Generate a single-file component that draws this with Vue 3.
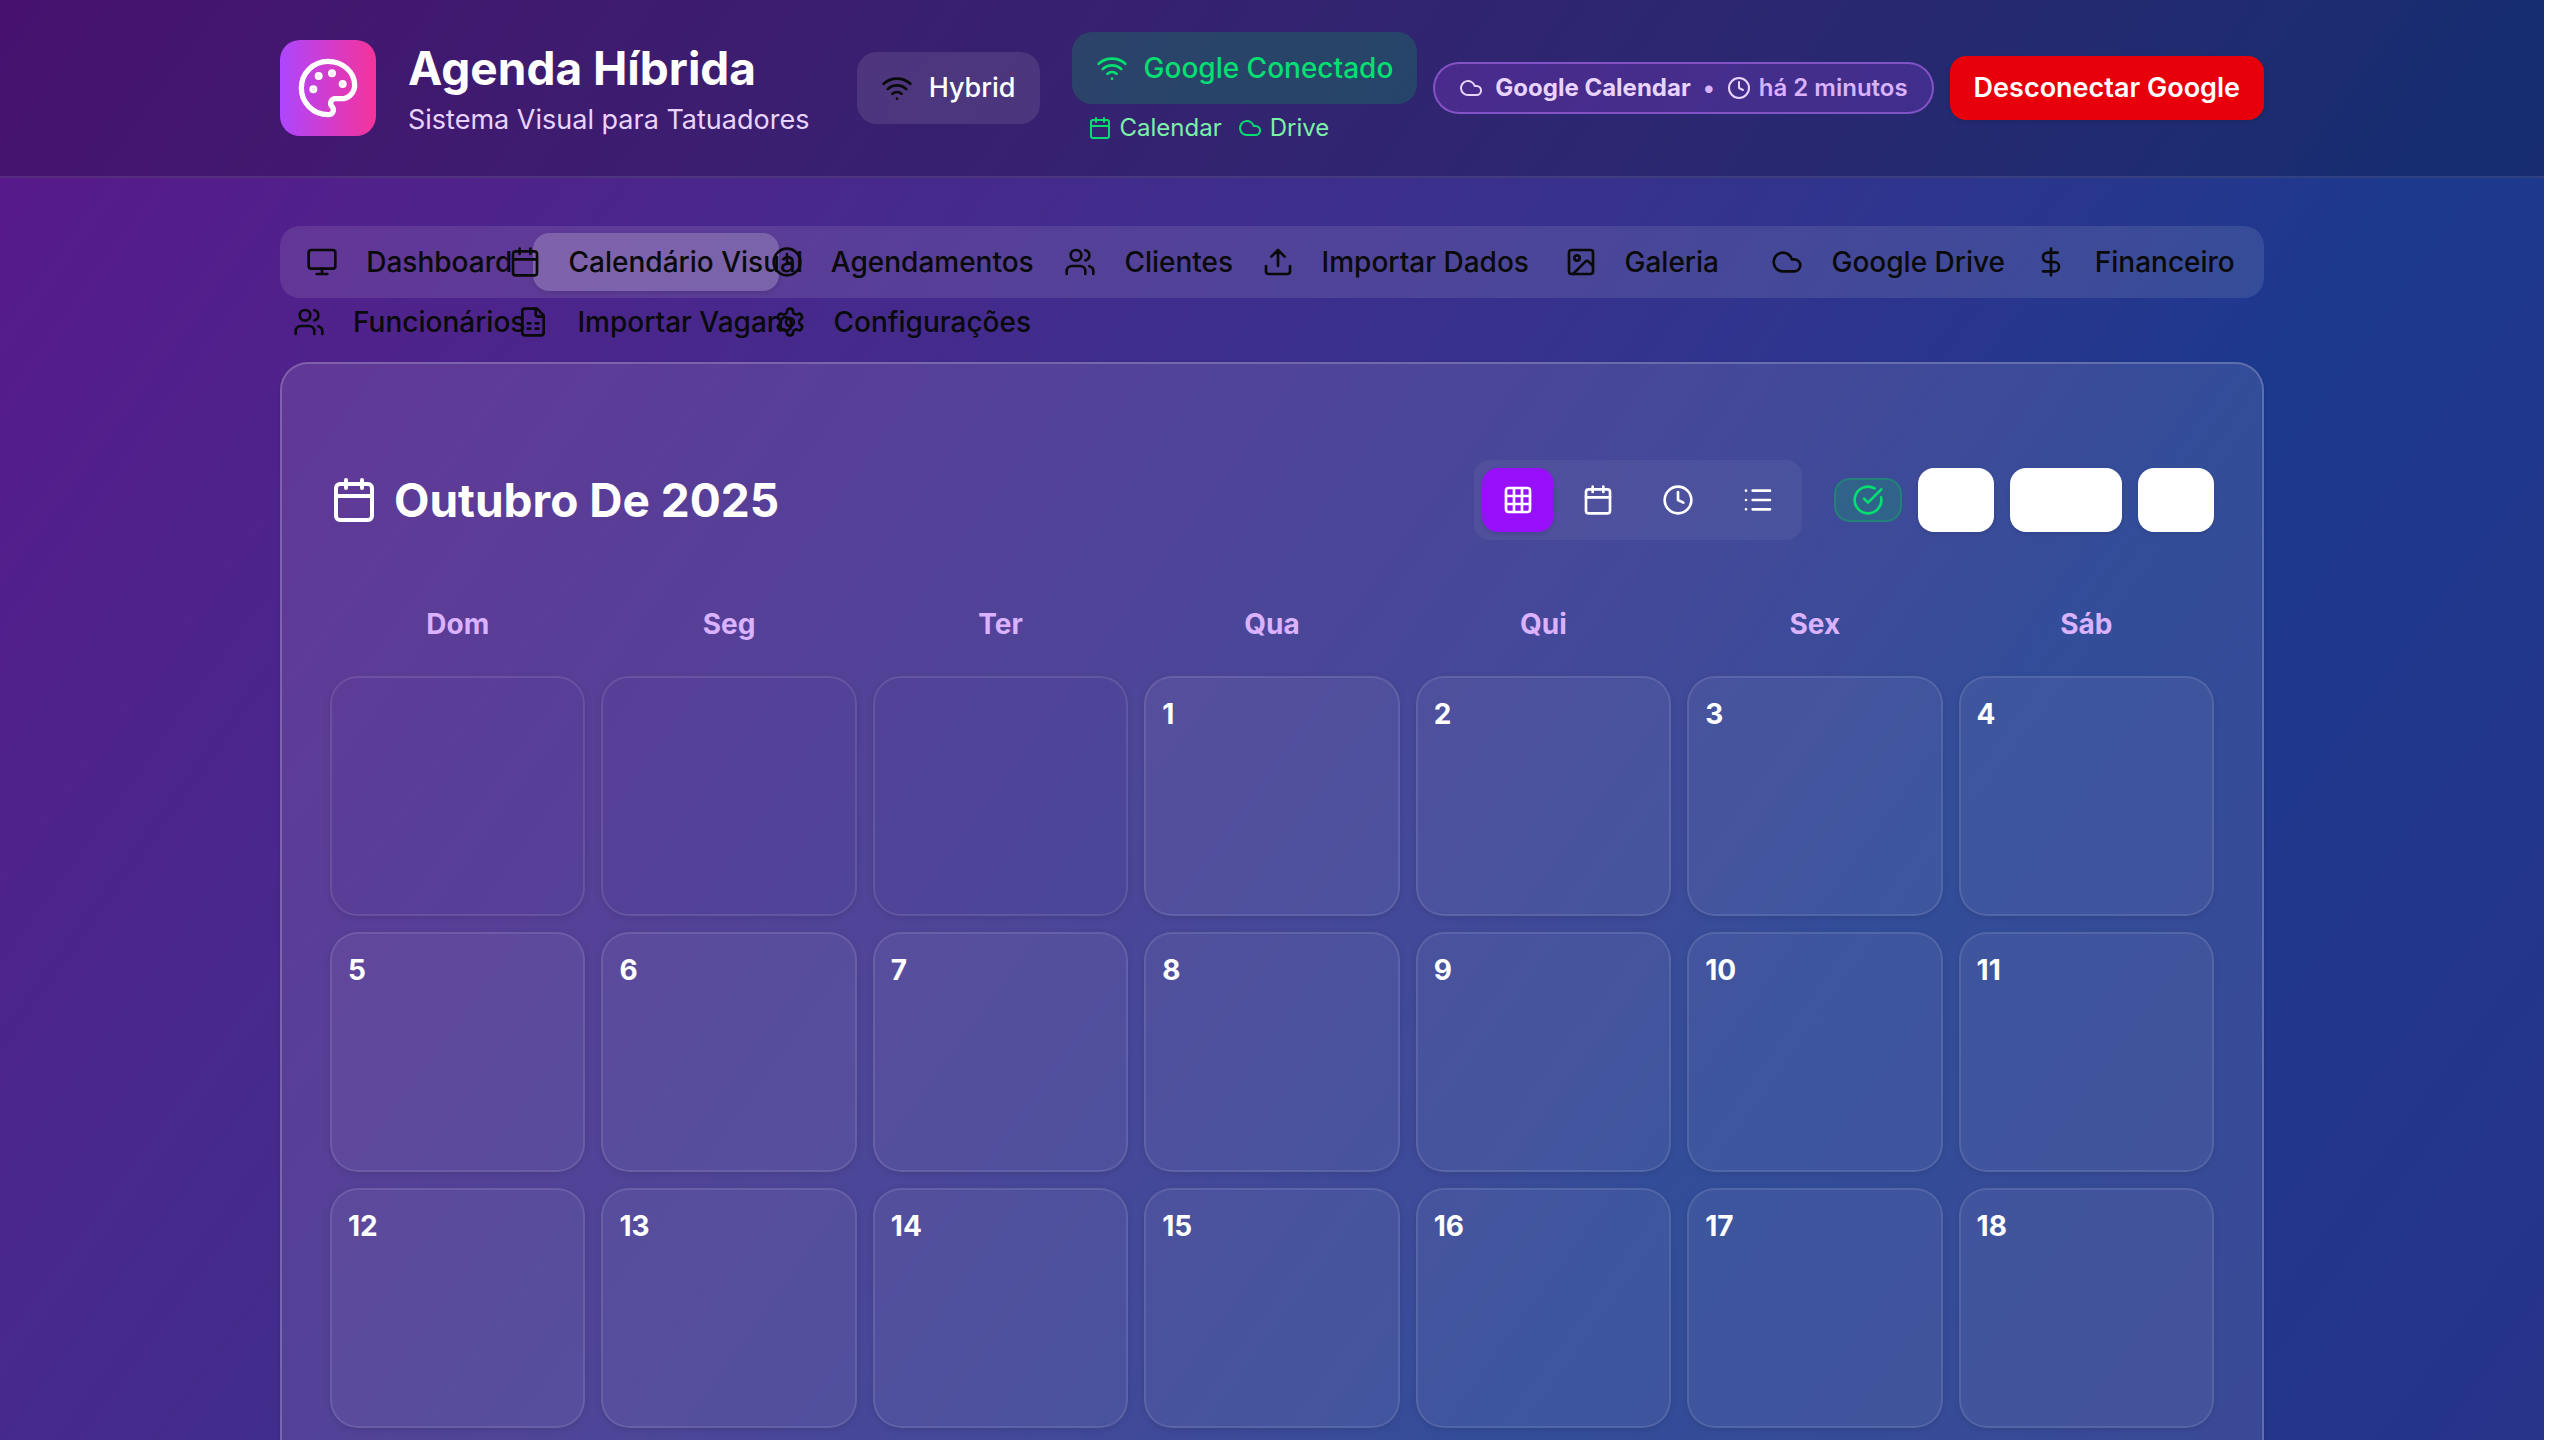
<script setup>
import { h } from 'vue'

const shapes = {
  palette: [
    ['path', { d: 'M12 22a1 1 0 0 1 0-20 10 9 0 0 1 10 9 5 5 0 0 1-5 5h-2.25a1.75 1.75 0 0 0-1.4 2.8l.3.4a1.75 1.75 0 0 1-1.4 2.8z' }],
    ['circle', { cx: 13.5, cy: 6.5, r: 0.5, fill: 'currentColor' }],
    ['circle', { cx: 17.5, cy: 10.5, r: 0.5, fill: 'currentColor' }],
    ['circle', { cx: 6.5, cy: 12.5, r: 0.5, fill: 'currentColor' }],
    ['circle', { cx: 8.5, cy: 7.5, r: 0.5, fill: 'currentColor' }],
  ],
  wifi: [
    ['path', { d: 'M12 20h.01' }],
    ['path', { d: 'M2 8.82a15 15 0 0 1 20 0' }],
    ['path', { d: 'M5 12.859a10 10 0 0 1 14 0' }],
    ['path', { d: 'M8.5 16.429a5 5 0 0 1 7 0' }],
  ],
  calendar: [
    ['path', { d: 'M8 2v4M16 2v4M3 10h18' }],
    ['rect', { x: 3, y: 4, width: 18, height: 18, rx: 2 }],
  ],
  cloud: [['path', { d: 'M17.5 19H9a7 7 0 1 1 6.71-9h1.79a4.5 4.5 0 1 1 0 9Z' }]],
  clock: [
    ['circle', { cx: 12, cy: 12, r: 10 }],
    ['path', { d: 'M12 6v6l4 2' }],
  ],
  monitor: [
    ['rect', { x: 2, y: 3, width: 20, height: 14, rx: 2 }],
    ['path', { d: 'M8 21h8M12 17v4' }],
  ],
  users: [
    ['path', { d: 'M16 21v-2a4 4 0 0 0-4-4H6a4 4 0 0 0-4 4v2' }],
    ['path', { d: 'M16 3.128a4 4 0 0 1 0 7.744' }],
    ['path', { d: 'M22 21v-2a4 4 0 0 0-3-3.87' }],
    ['circle', { cx: 9, cy: 7, r: 4 }],
  ],
  upload: [
    ['path', { d: 'M12 3v12M17 8l-5-5-5 5' }],
    ['path', { d: 'M21 15v4a2 2 0 0 1-2 2H5a2 2 0 0 1-2-2v-4' }],
  ],
  image: [
    ['rect', { x: 3, y: 3, width: 18, height: 18, rx: 2 }],
    ['circle', { cx: 9, cy: 9, r: 2 }],
    ['path', { d: 'm21 15-3.086-3.086a2 2 0 0 0-2.828 0L6 21' }],
  ],
  dollar: [
    ['path', { d: 'M12 2v20' }],
    ['path', { d: 'M17 5H9.5a3.5 3.5 0 0 0 0 7h5a3.5 3.5 0 0 1 0 7H6' }],
  ],
  sheet: [
    ['path', { d: 'M15 2H6a2 2 0 0 0-2 2v16a2 2 0 0 0 2 2h12a2 2 0 0 0 2-2V7Z' }],
    ['path', { d: 'M14 2v4a2 2 0 0 0 2 2h4' }],
    ['path', { d: 'M8 13h2M14 13h2M8 17h2M14 17h2' }],
  ],
  settings: [
    ['path', { d: 'M12.22 2h-.44a2 2 0 0 0-2 2v.18a2 2 0 0 1-1 1.73l-.43.25a2 2 0 0 1-2 0l-.15-.08a2 2 0 0 0-2.73.73l-.22.38a2 2 0 0 0 .73 2.73l.15.1a2 2 0 0 1 1 1.72v.51a2 2 0 0 1-1 1.74l-.15.09a2 2 0 0 0-.73 2.73l.22.38a2 2 0 0 0 2.73.73l.15-.08a2 2 0 0 1 2 0l.43.25a2 2 0 0 1 1 1.73V20a2 2 0 0 0 2 2h.44a2 2 0 0 0 2-2v-.18a2 2 0 0 1 1-1.73l.43-.25a2 2 0 0 1 2 0l.15.08a2 2 0 0 0 2.73-.73l.22-.39a2 2 0 0 0-.73-2.73l-.15-.08a2 2 0 0 1-1-1.74v-.5a2 2 0 0 1 1-1.74l.15-.09a2 2 0 0 0 .73-2.73l-.22-.38a2 2 0 0 0-2.73-.73l-.15.08a2 2 0 0 1-2 0l-.43-.25a2 2 0 0 1-1-1.73V4a2 2 0 0 0-2-2z' }],
    ['circle', { cx: 12, cy: 12, r: 3 }],
  ],
  grid: [
    ['rect', { x: 3, y: 3, width: 18, height: 18, rx: 2 }],
    ['path', { d: 'M3 9h18M3 15h18M9 3v18M15 3v18' }],
  ],
  list: [['path', { d: 'M3 5h.01M3 12h.01M3 19h.01M8 5h13M8 12h13M8 19h13' }]],
  check: [
    ['path', { d: 'M21.801 10A10 10 0 1 1 17 3.335' }],
    ['path', { d: 'm9 11 3 3L22 4' }],
  ],
}

const Icon = (props) =>
  h(
    'svg',
    {
      viewBox: '0 0 24 24',
      fill: 'none',
      stroke: 'currentColor',
      'stroke-width': 2,
      'stroke-linecap': 'round',
      'stroke-linejoin': 'round',
      'aria-hidden': 'true',
    },
    shapes[props.name].map(([tag, attrs]) => h(tag, attrs)),
  )
Icon.props = ['name']

const tabs = [
  { icon: 'monitor', label: 'Dashboard' },
  { icon: 'calendar', label: 'Calendário Visual', active: true },
  { icon: 'clock', label: 'Agendamentos' },
  { icon: 'users', label: 'Clientes' },
  { icon: 'upload', label: 'Importar Dados' },
  { icon: 'image', label: 'Galeria' },
  { icon: 'cloud', label: 'Google Drive' },
  { icon: 'dollar', label: 'Financeiro' },
  { icon: 'users', label: 'Funcionários' },
  { icon: 'sheet', label: 'Importar Vagaro' },
  { icon: 'settings', label: 'Configurações' },
]

const views = [
  { icon: 'grid', label: 'Mês', active: true },
  { icon: 'calendar', label: 'Semana' },
  { icon: 'clock', label: 'Dia' },
  { icon: 'list', label: 'Lista' },
]

const weekdays = ['Dom', 'Seg', 'Ter', 'Qua', 'Qui', 'Sex', 'Sáb']
const leadingBlanks = 3
const days = 18
</script>

<template>
  <div class="app">
    <header class="topbar">
      <div class="container topbar-row">
        <div class="brand">
          <div class="logo"><Icon name="palette" class="icon-xl" /></div>
          <div>
            <h1 class="title">Agenda Híbrida</h1>
            <p class="subtitle">Sistema Visual para Tatuadores</p>
          </div>
        </div>

        <div class="status">
          <div class="chip mode"><Icon name="wifi" class="icon-md dark" /><span>Hybrid</span></div>
          <div class="google">
            <div class="connection">
              <div class="chip connected"><Icon name="wifi" class="icon-md" /><span>Google Conectado</span></div>
              <div class="services">
                <span class="service"><Icon name="calendar" class="icon-sm" />Calendar</span>
                <span class="service"><Icon name="cloud" class="icon-sm" />Drive</span>
              </div>
            </div>
            <div class="sync">
              <Icon name="cloud" class="icon-sm" />
              <span class="sync-name">Google Calendar</span>
              <span class="sync-time">•</span>
              <span class="sync-ago"><Icon name="clock" class="icon-sm" /><span class="sync-time">há 2 minutos</span></span>
            </div>
            <button type="button" class="disconnect">Desconectar Google</button>
          </div>
        </div>
      </div>
    </header>

    <main class="container main">
      <nav class="tabs" aria-label="Seções">
        <button v-for="tab in tabs" :key="tab.label" type="button" class="tab" :class="{ active: tab.active }">
          <Icon :name="tab.icon" class="icon-md" />
          <span>{{ tab.label }}</span>
        </button>
      </nav>

      <section class="card">
        <div class="card-head">
          <h2 class="month"><Icon name="calendar" class="icon-lg" />Outubro De 2025</h2>
          <div class="tools">
            <div class="views">
              <button
                v-for="view in views"
                :key="view.label"
                type="button"
                class="view"
                :class="{ active: view.active }"
                :aria-label="view.label"
              >
                <Icon :name="view.icon" class="icon-md" />
              </button>
            </div>
            <div class="pager">
              <span class="synced"><Icon name="check" class="icon-md" /></span>
              <button type="button" class="page" aria-label="Mês anterior"></button>
              <button type="button" class="page today" aria-label="Mês atual"></button>
              <button type="button" class="page" aria-label="Próximo mês"></button>
            </div>
          </div>
        </div>

        <div class="calendar">
          <div v-for="name in weekdays" :key="name" class="weekday">{{ name }}</div>
          <div v-for="n in leadingBlanks" :key="'blank' + n" class="day blank"></div>
          <div v-for="n in days" :key="n" class="day">{{ n }}</div>
        </div>
      </section>
    </main>
  </div>
</template>

<style>
body {
  margin: 0;
  background: #fff;
}
</style>

<style scoped>
.app {
  margin-right: 16px;
  min-height: 100vh;
  color: #fff;
  font-family: Inter, 'Liberation Sans', sans-serif;
  font-size: 28px;
  line-height: 40px;
  background: linear-gradient(to bottom right in oklab, #59168b, #1c398e, #312c85) 0 0 / 100% 3500px;
}
h1,
h2,
p {
  margin: 0;
}
button {
  margin: 0;
  padding: 0;
  border: 0;
  font: inherit;
  color: inherit;
  background: none;
}
svg {
  flex: none;
  display: block;
}
.icon-sm {
  width: 24px;
  height: 24px;
}
.icon-md {
  width: 32px;
  height: 32px;
}
.icon-lg {
  width: 48px;
  height: 48px;
}
.icon-xl {
  width: 64px;
  height: 64px;
}
.dark {
  color: #0a0a0a;
}
.container {
  box-sizing: border-box;
  max-width: 1984px;
  margin: 0 auto;
}
.topbar {
  padding: 32px 0;
  background: rgba(0, 0, 0, 0.2);
  border-bottom: 2px solid rgba(255, 255, 255, 0.1);
}
.topbar-row,
.brand,
.status,
.google,
.chip,
.services,
.service,
.sync,
.sync-ago {
  display: flex;
  align-items: center;
}
.topbar-row {
  justify-content: space-between;
}
.topbar-row,
.topbar-row span,
.title,
.subtitle {
  white-space: nowrap;
}
.brand {
  gap: 32px;
}
.logo {
  padding: 16px;
  border-radius: 20px;
  background: linear-gradient(to right, #ad46ff, #f6339a);
}
.title {
  font-size: 46px;
  line-height: 64px;
  font-weight: 700;
}
.subtitle {
  font-size: 27px;
  color: #e9d4ff;
}
.status {
  gap: 32px;
}
.google {
  gap: 16px;
}
.chip {
  gap: 16px;
  padding: 16px 24px;
  border-radius: 20px;
  font-weight: 500;
  background: rgba(255, 255, 255, 0.1);
}
.mode {
  font-size: 27px;
}
.connected {
  color: #05df72;
  background: rgba(0, 201, 80, 0.2);
}
.services {
  gap: 16px;
  margin-top: 8px;
  padding-left: 16px;
  font-size: 24px;
  line-height: 32px;
}
.service {
  gap: 8px;
  color: #7bf1a8;
}
.service svg {
  color: #05df72;
}
.sync {
  gap: 12px;
  padding: 8px 24px;
  border: 2px solid rgba(194, 122, 255, 0.5);
  border-radius: 28px;
  font-size: 24px;
  line-height: 32px;
  color: #e9d4ff;
  background: rgba(173, 70, 255, 0.2);
}
.sync-name {
  font-weight: 700;
}
.sync-time {
  color: #dab2ff;
  font-weight: 600;
}
.sync-ago {
  gap: 8px;
}
.disconnect {
  padding: 12px 24px;
  border-radius: 16px;
  font-size: 27px;
  font-weight: 600;
  background: #e7000b;
  box-shadow: 0 2px 4px rgba(0, 0, 0, 0.1);
}
.main {
  padding: 48px 0;
}
.tabs {
  box-sizing: border-box;
  display: grid;
  grid-template-columns: repeat(8, minmax(0, 1fr));
  grid-auto-rows: 60px;
  align-items: center;
  height: 72px;
  margin-bottom: 64px;
  padding: 6px;
  border-radius: 20px;
  background: rgba(255, 255, 255, 0.1);
}
.tab {
  display: flex;
  align-items: center;
  justify-content: center;
  gap: 28px;
  height: 58px;
  border-radius: 16px;
  color: #0a0a0a;
  font-weight: 500;
  white-space: nowrap;
}
.tab.active {
  background: rgba(255, 255, 255, 0.2);
  box-shadow: 0 2px 4px rgba(0, 0, 0, 0.12);
}
.card {
  padding: 96px 48px 48px;
  border: 2px solid rgba(255, 255, 255, 0.2);
  border-radius: 28px;
  background: rgba(255, 255, 255, 0.1);
  box-shadow: 0 2px 4px rgba(0, 0, 0, 0.1);
}
.card-head,
.month,
.tools,
.views,
.pager {
  display: flex;
  align-items: center;
}
.card-head {
  justify-content: space-between;
  margin-bottom: 48px;
}
.month {
  gap: 16px;
  font-size: 46px;
  line-height: 64px;
  font-weight: 700;
}
.tools {
  gap: 32px;
}
.views {
  gap: 8px;
  padding: 8px;
  border-radius: 16px;
  background: rgba(255, 255, 255, 0.05);
}
.view {
  padding: 16px 20px;
  border-radius: 16px;
}
.view.active {
  background: #9810fa;
  box-shadow: 0 2px 4px rgba(0, 0, 0, 0.12);
}
.pager {
  gap: 16px;
}
.synced {
  padding: 4px 16px;
  border: 2px solid rgba(0, 201, 80, 0.3);
  border-radius: 16px;
  color: #05df72;
  background: rgba(0, 201, 80, 0.2);
}
.page {
  width: 76px;
  height: 64px;
  border-radius: 16px;
  background: #fff;
  box-shadow: 0 2px 4px rgba(0, 0, 0, 0.1);
}
.today {
  width: 112px;
}
.calendar {
  display: grid;
  grid-template-columns: repeat(7, minmax(0, 1fr));
  gap: 16px;
}
.weekday {
  padding: 16px;
  text-align: center;
  font-weight: 700;
  color: #dab2ff;
}
.day {
  box-sizing: border-box;
  min-height: 240px;
  padding: 16px;
  border: 2px solid rgba(255, 255, 255, 0.1);
  border-radius: 28px;
  font-weight: 700;
  background: rgba(255, 255, 255, 0.05);
  box-shadow: 0 2px 6px rgba(0, 0, 0, 0.1);
}
.blank {
  background: none;
}
</style>
